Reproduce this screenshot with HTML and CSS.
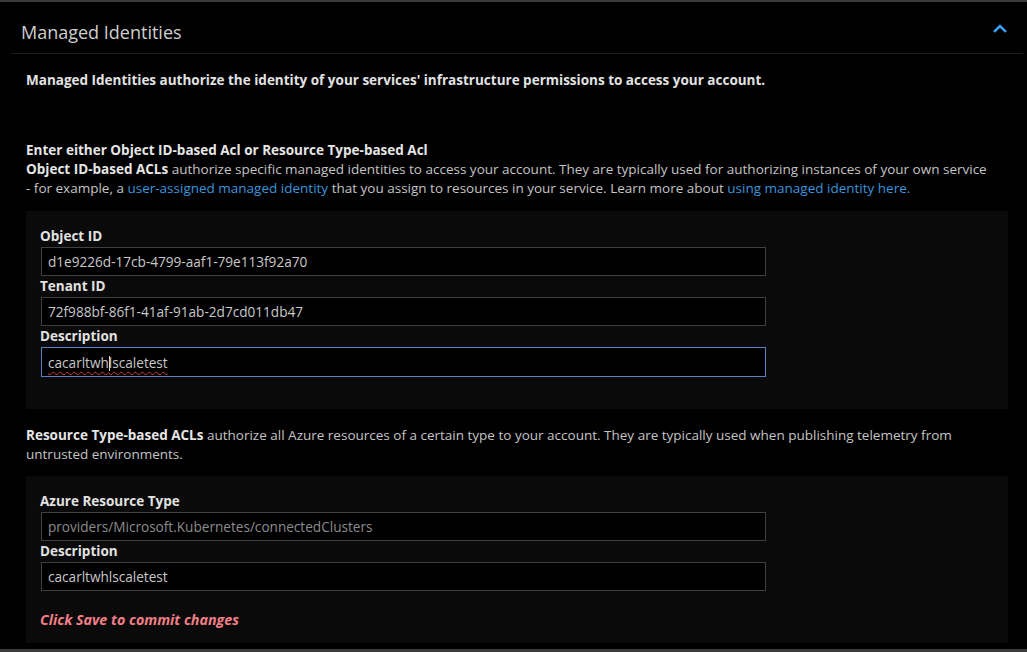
FILE: index.html
```html
<!DOCTYPE html>
<html lang="en">
<head>
<meta charset="utf-8">
<title>Managed Identities</title>
<link rel="stylesheet" href="styles.css">
</head>
<body>
<section class="blade">
  <header class="blade-header">
    <h2 class="blade-title">Managed Identities</h2>
    <button class="collapse" aria-label="Collapse">
      <svg width="14" height="10" viewBox="0 0 14 10"><path d="M2 8 L7 3 L12 8" fill="none" stroke="#3aa0f2" stroke-width="2.6" stroke-linecap="square"/></svg>
    </button>
  </header>
  <div class="blade-body">
    <p class="intro">Managed Identities authorize the identity of your services' infrastructure permissions to access your account.</p>

    <p class="desc desc-top"><strong>Enter either Object ID-based Acl or Resource Type-based Acl</strong><br>
    <strong>Object ID-based ACLs</strong> authorize specific managed identities to access your account. They are typically used for authorizing instances of your own service <span class="nowrap">- for</span> example, a <a href="#">user-assigned managed identity</a> that you assign to resources in your service. Learn more about <a href="#">using managed identity here.</a></p>

    <div class="panel panel-object">
      <label class="field-label">Object ID</label>
      <div class="field">d1e9226d-17cb-4799-aaf1-79e113f92a70</div>
      <label class="field-label">Tenant ID</label>
      <div class="field">72f988bf-86f1-41af-91ab-2d7cd011db47</div>
      <label class="field-label">Description</label>
      <div class="field field-focus"><span class="misspelled">cacarltwh<span class="caret"></span>lscaletest</span></div>
    </div>

    <p class="desc desc-resource"><strong>Resource Type-based ACLs</strong> authorize all Azure resources of a certain type to your account. They are typically used when publishing telemetry from untrusted environments.</p>

    <div class="panel panel-resource">
      <label class="field-label">Azure Resource Type</label>
      <div class="field field-disabled">providers/Microsoft.Kubernetes/connectedClusters</div>
      <label class="field-label">Description</label>
      <div class="field">cacarltwhlscaletest</div>
      <p class="save-note">Click Save to commit changes</p>
    </div>
  </div>
</section>
</body>
</html>
```

FILE: styles.css
```css
html, body {
  margin: 0;
  padding: 0;
  background: #000;
}

body {
  font-family: "Open Sans", "Noto Sans", sans-serif;
  font-size: 13.5px;
  color: #c4c4c4;
}

.blade {
  height: 652px;
  box-sizing: border-box;
  border-top: 2px solid #3a3a3a;
  border-bottom: 3px solid #3c3c3c;
  overflow: hidden;
}

.blade-header {
  display: flex;
  align-items: center;
  justify-content: space-between;
  height: 51px;
  margin: 0 4px 0 11px;
  padding: 0 16px 0 10px;
  border-bottom: 1px solid #1c1c1c;
}

.blade-title {
  margin: 0;
  padding-top: 9px;
  font-size: 18px;
  font-weight: 400;
  color: #cfcfcf;
}

.collapse {
  display: flex;
  padding: 0;
  border: 0;
  background: none;
}

.blade-body {
  padding: 0 19px 0 26px;
}

p {
  margin: 0;
}

.nowrap {
  white-space: nowrap;
}

.intro {
  margin-top: 17px;
  line-height: 19px;
  font-weight: 700;
  color: #e2e2e2;
}

.desc {
  line-height: 19px;
}

.desc strong {
  color: #e6e6e6;
}

.desc-top {
  margin-top: 51px;
}

.desc a {
  color: #3b95dc;
  text-decoration: none;
}

.panel {
  background: #0a0a0a;
  display: flex;
  flex-direction: column;
  align-items: flex-start;
  padding: 15px 14px 32px;
}

.panel-object {
  margin-top: 13px;
}

.panel-resource {
  margin-top: 12px;
  padding-bottom: 13px;
}

.desc-resource {
  margin-top: 17px;
}

.field-label {
  display: block;
  line-height: 21px;
  font-weight: 700;
  color: #e2e2e2;
}

.field {
  box-sizing: border-box;
  width: 725px;
  height: 29px;
  margin-left: 1px;
  padding: 0 6px;
  display: flex;
  align-items: center;
  background: #000;
  border: 1px solid #404040;
  color: #c8c8c8;
  font-size: 13.6px;
}

.field-focus {
  border-color: #5b7fc4;
  height: 30px;
}

.field-disabled {
  color: #8c8c8c;
}

.misspelled {
  text-decoration: underline wavy #d23a3a;
  text-underline-offset: 3px;
  text-decoration-thickness: 1px;
}

.caret {
  display: inline-block;
  width: 1px;
  height: 15px;
  margin-right: -1px;
  vertical-align: -3px;
  background: #d8d8d8;
}

.save-note {
  margin-top: 19px;
  line-height: 20px;
  font-size: 14.3px;
  font-weight: 700;
  font-style: italic;
  color: #f37f87;
}
```
